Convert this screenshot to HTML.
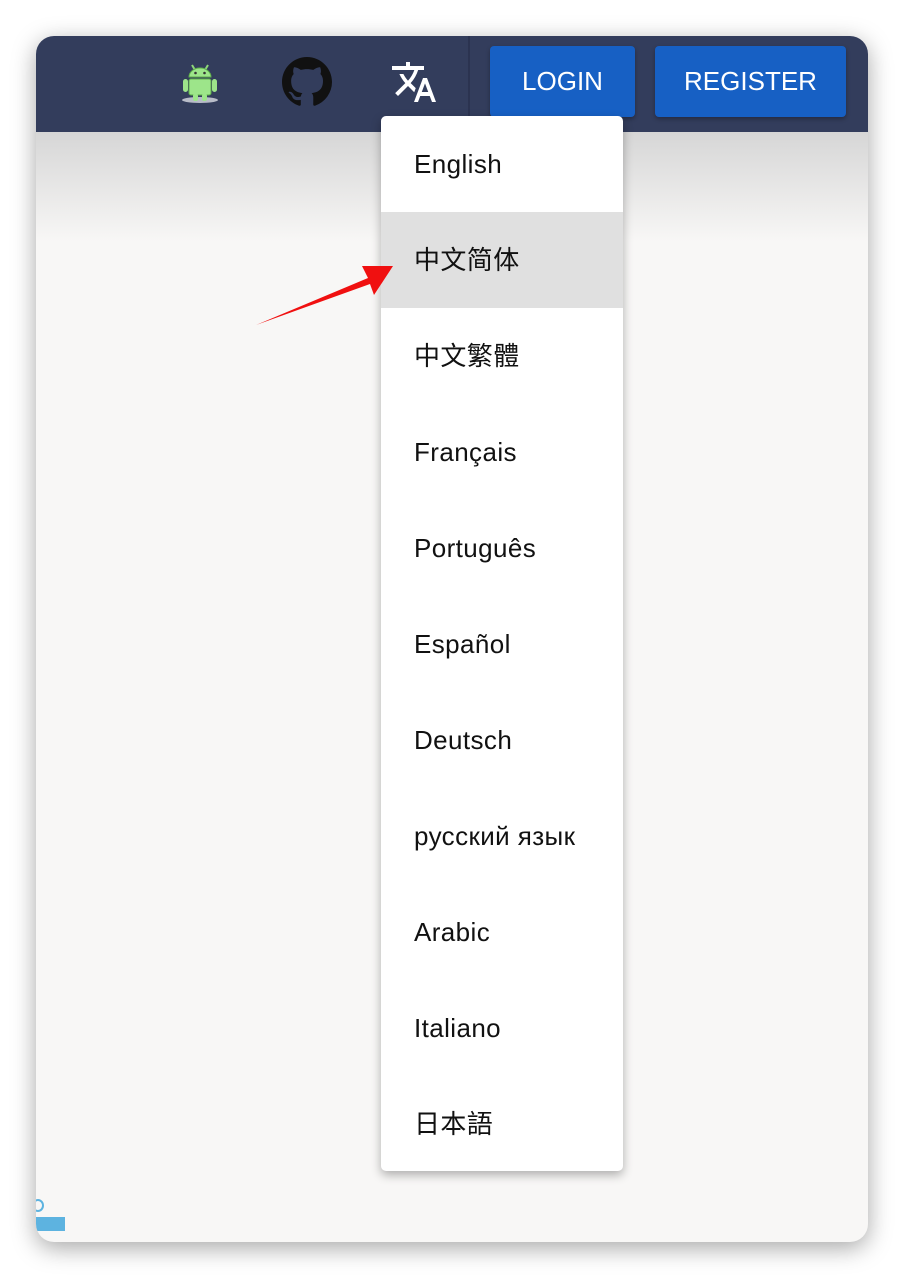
<!DOCTYPE html>
<html><head><meta charset="utf-8"><style>
body{margin:0;width:904px;height:1278px;background:#fff;position:relative;overflow:hidden;font-family:"Liberation Sans","Noto Sans CJK SC",sans-serif}
.win{position:absolute;left:36px;top:36px;width:832px;height:1206px;border-radius:18px;background:#f8f7f6;overflow:hidden;box-shadow:0 6px 24px rgba(0,0,0,.35)}
.hdr{position:absolute;left:0;top:0;width:832px;height:96px;background:#333d5c}
.shade{position:absolute;left:0;top:96px;width:832px;height:110px;background:linear-gradient(#d6d6d6,#f8f7f6)}
.div{position:absolute;left:432px;top:0;width:2px;height:96px;background:#2b3350}
.btn{position:absolute;top:10px;height:71px;background:#1760c4;border-radius:4px;color:#fff;font-size:26px;line-height:71px;text-align:center;box-shadow:0 2px 4px rgba(0,0,0,.3)}
.menu{position:absolute;left:381px;top:116px;width:242px;height:1055px;background:#fff;border-radius:5px;box-shadow:0 4px 10px rgba(0,0,0,.3);overflow:hidden}
.it{height:96px;line-height:96px;padding-left:33px;font-size:26px;letter-spacing:.4px;color:#111}
.sel{background:#e0e0e0}
</style></head><body>
<div class="win">
<div class="hdr"></div>
<div class="shade"></div>
<div class="div"></div>
<div class="btn" style="left:454px;width:145px">LOGIN</div>
<div class="btn" style="left:619px;width:191px">REGISTER</div>
<svg style="position:absolute;left:144px;top:26px" width="40" height="44" viewBox="0 0 40 44">
<ellipse cx="20" cy="38" rx="18" ry="3" fill="#b8bcc8"/>
<line x1="12" y1="3" x2="15" y2="8" stroke="#8ed67a" stroke-width="2"/><line x1="28" y1="3" x2="25" y2="8" stroke="#8ed67a" stroke-width="2"/>
<path d="M9 15a11 9 0 0 1 22 0z" fill="#9de58a" stroke="#5fb04a"/>
<rect x="9" y="17" width="22" height="16" rx="2" fill="#9de58a" stroke="#5fb04a"/>
<rect x="3" y="17" width="5" height="13" rx="2.5" fill="#9de58a"/><rect x="32" y="17" width="5" height="13" rx="2.5" fill="#9de58a"/>
<rect x="13" y="32" width="5" height="7" rx="2" fill="#9de58a"/><rect x="22" y="32" width="5" height="7" rx="2" fill="#9de58a"/>
<circle cx="15.5" cy="11" r="1.3" fill="#333"/><circle cx="24.5" cy="11" r="1.3" fill="#333"/></svg>
<svg style="position:absolute;left:246px;top:21px" width="50" height="50" viewBox="0 0 16 16"><path fill="#111" d="M8 0C3.58 0 0 3.58 0 8c0 3.54 2.29 6.53 5.47 7.59.4.07.55-.17.55-.38 0-.19-.01-.82-.01-1.49-2.01.37-2.53-.49-2.69-.94-.09-.23-.48-.94-.82-1.13-.28-.15-.68-.52-.01-.53.63-.01 1.08.58 1.230.82.72 1.21 1.87.87 2.33.66.07-.52.28-.87.51-1.07-1.78-.2-3.64-.89-3.64-3.95 0-.87.31-1.59.82-2.15-.08-.2-.36-1.02.08-2.12 0 0 .67-.21 2.2.82.64-.18 1.32-.27 2-.27.68 0 1.36.09 2 .27 1.53-1.04 2.2-.82 2.2-.82.44 1.1.16 1.92.08 2.12.51.56.82 1.27.82 2.15 0 3.07-1.87 3.75-3.65 3.95.29.25.54.73.54 1.48 0 1.07-.01 1.93-.01 2.2 0 .21.15.46.55.38A8.013 8.013 0 0016 8c0-4.42-3.58-8-8-8z"/></svg>
<svg style="position:absolute;left:354px;top:22px" width="48" height="48" viewBox="0 0 24 24"><path fill="#fff" d="M12.87 15.07l-2.54-2.51.03-.03A17.52 17.52 0 0014.07 6H17V4h-7V2H8v2H1v1.99h11.17C11.5 7.92 10.44 9.75 9 11.35 8.07 10.32 7.3 9.19 6.69 8h-2c.73 1.630 1.73 3.17 2.98 4.56l-5.09 5.02L4 19l5-5 3.11 3.11.76-2.04zM18.5 10h-2L12 22h2l1.12-3h4.75L21 22h2l-4.5-12zm-2.62 7l1.62-4.33L19.12 17h-3.240z"/></svg>
<div style="position:absolute;left:0;top:1181px;width:29px;height:14px;background:#5db3e0"></div>
<div style="position:absolute;left:-4px;top:1163px;width:8px;height:9px;border:2px solid #5db3e0;border-radius:50%"></div>
</div>
<div class="menu">
<div class="it">English</div><div class="it sel">中文简体</div><div class="it">中文繁體</div><div class="it">Français</div><div class="it">Português</div><div class="it">Español</div><div class="it">Deutsch</div><div class="it">русский язык</div><div class="it">Arabic</div><div class="it">Italiano</div><div class="it">日本語</div>
</div>
<svg style="position:absolute;left:0;top:0" width="904" height="1278"><path d="M256 325 L368 278 L362 266 L393 266 L374 295 L370 284 Z" fill="#f01010"/></svg>
</body></html>
